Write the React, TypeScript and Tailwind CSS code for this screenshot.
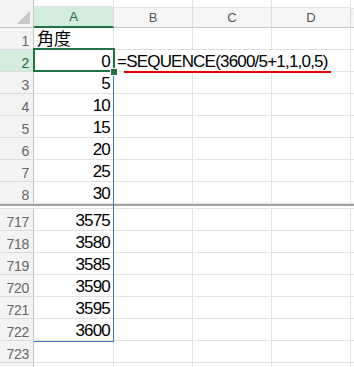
const font = "font-['Liberation_Sans','Noto_Sans_CJK_JP',sans-serif]";

const topRows: [number, string][] = [
  [1, "角度"],
  [2, "0"],
  [3, "5"],
  [4, "10"],
  [5, "15"],
  [6, "20"],
  [7, "25"],
  [8, "30"],
];

const bottomRows: [number, string][] = [
  [717, "3575"],
  [718, "3580"],
  [719, "3585"],
  [720, "3590"],
  [721, "3595"],
  [722, "3600"],
  [723, ""],
  [724, ""],
];

function RowHead({ n, active }: { n: number; active?: boolean }) {
  return (
    <div
      className={`flex h-full w-[34px] shrink-0 items-end justify-end border-r border-b border-r-[#c6c6c6] border-b-[#dcdcdc] pr-[4px] pb-[1px] text-[14px] leading-none tracking-[-0.3px] ${
        active ? "bg-[#d3ecdc] text-[#1d6b40]" : "bg-[#f3f3f3] text-[#666666]"
      }`}
    >
      {n < 724 ? n : null}
    </div>
  );
}

function Cell({ w, children, left }: { w: string; children?: React.ReactNode; left?: boolean }) {
  return (
    <div
      className={`flex h-full shrink-0 items-end overflow-visible whitespace-nowrap border-r border-b border-[#e1e1e1] pb-[1px] text-[17px] leading-none tracking-[-0.8px] text-black ${w} ${
        left ? "justify-start pl-[3px]" : "justify-end pr-[3px]"
      }`}
    >
      {children}
    </div>
  );
}

function Row({ n, a }: { n: number; a: string }) {
  const isText = n === 1;
  return (
    <div className="flex h-[22px]">
      <RowHead n={n} active={n === 2} />
      <Cell w="w-[80px]" left={isText}>
        {isText ? <span className="tracking-normal">{a}</span> : a}
      </Cell>
      {n === 2 ? (
        <Cell w="w-[237px]" left>
          =SEQUENCE(3600/5+1,1,0,5)
        </Cell>
      ) : (
        <>
          <Cell w="w-[79px]" />
          <Cell w="w-[79px]" />
          <Cell w="w-[79px]" />
        </>
      )}
      <div className="h-full flex-1 border-b border-[#e1e1e1]" />
    </div>
  );
}

function ColHead({ label, w, active }: { label: string; w: string; active?: boolean }) {
  return (
    <div className={`flex h-full shrink-0 flex-col ${w}`}>
      <div className="h-[8px] border-r border-[#e6e6e6]" />
      <div
        className={`flex flex-1 items-center justify-center border-t border-r border-t-[#e3e3e3] border-r-[#dcdcdc] text-[13px] ${
          active
            ? "border-b-2 border-b-[#217346] bg-[#d3ecdc] text-[#1d6b40]"
            : "border-b border-b-[#c6c6c6] bg-[#f5f5f5] text-[#555555]"
        }`}
      >
        {label}
      </div>
    </div>
  );
}

export default function App() {
  return (
    <div className={`relative h-[367px] w-[354px] overflow-hidden bg-white ${font}`}>
      <div className="flex h-[28px]">
        <div className="flex h-full w-[34px] shrink-0 items-end justify-end border-r border-b border-[#c6c6c6] bg-[#f3f3f3] pr-[2px] pb-[2px]">
          <svg width="14" height="14" viewBox="0 0 14 14">
            <polygon points="13,0 13,13 0,13" fill="#c8c8c8" />
          </svg>
        </div>
        <ColHead label="A" w="w-[80px]" active />
        <ColHead label="B" w="w-[79px]" />
        <ColHead label="C" w="w-[79px]" />
        <ColHead label="D" w="w-[79px]" />
        <div className="flex h-full flex-1 flex-col">
          <div className="h-[8px]" />
          <div className="flex-1 border-t border-b border-t-[#e3e3e3] border-b-[#c6c6c6] bg-[#f5f5f5]" />
        </div>
      </div>

      {topRows.map(([n, a]) => (
        <Row key={n} n={n} a={a} />
      ))}

      <div className="h-[2px] bg-[#a3a3a3]" />
      <div className="h-[2px] bg-white" />
      <div className="h-[1px] bg-[#e1e1e1]" />

      {bottomRows.map(([n, a]) => (
        <Row key={n} n={n} a={a} />
      ))}

      {/* spill range border */}
      <div className="pointer-events-none absolute top-[49px] left-[34px] h-[293px] w-[80px] border-r border-b border-[#4472c4]" />
      {/* active cell */}
      <div className="pointer-events-none absolute top-[48px] left-[33px] h-[24px] w-[82px] border-2 border-[#217346]" />
      <div className="pointer-events-none absolute top-[68px] left-[110px] h-[8px] w-[8px] border border-white bg-[#217346]" />
      {/* formula underline */}
      <div className="pointer-events-none absolute top-[71px] left-[124px] h-[2px] w-[207px] bg-[#e60000]" />
    </div>
  );
}
